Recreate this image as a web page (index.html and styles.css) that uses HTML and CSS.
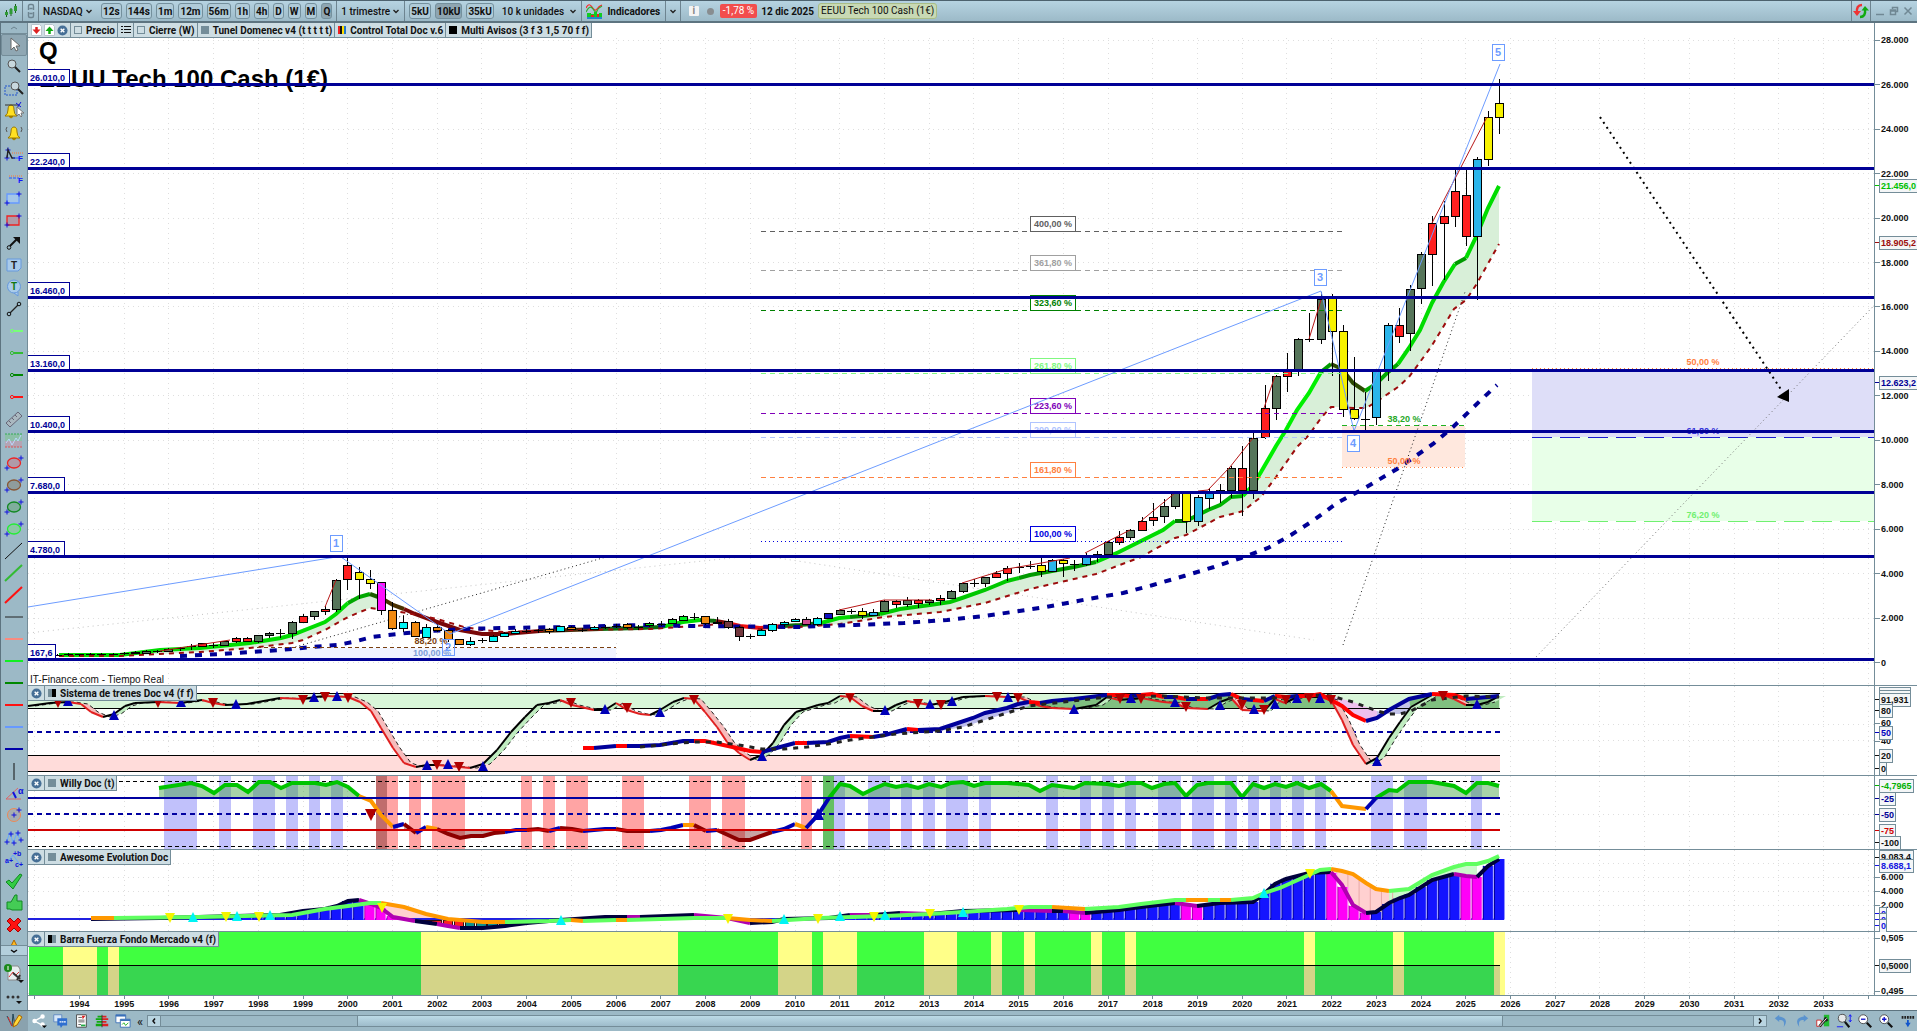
FILE: index.html
```html
<!DOCTYPE html>
<html lang="es">
<head>
  <meta charset="UTF-8" />
  <meta name="viewport" content="width=device-width, initial-scale=1" />
  <title>NASDAQ - EEUU Tech 100 Cash (1€)</title>
  <link rel="stylesheet" href="styles.css">
</head>
<body>

  <header class="toolbar">
    <button class="tool-btn logo-btn" aria-label="Gráfico">
      <svg width="16" height="16" viewBox="0 0 16 16"><path d="M3.500 7v7M8 5v8M12.500 1v9" stroke="#1c5c1c"/><path d="M2 9h3v3H2zM6.500 6h3v5h-3zM11 3h3v5h-3z" fill="#2f9a35"/></svg>
    </button>
    <button class="tool-btn link-btn" aria-label="Vincular">
      <svg width="8" height="16" viewBox="0 0 8 16" fill="none" stroke="#6d8490" stroke-width="1.400"><path d="M1.500 7V3q0-1.500 1.500-1.500h2q1.500 0 1.500 1.500v4M1.500 9v4q0 1.500 1.500 1.500h2q1.500 0 1.500-1.500V9M2.500 5.500h3M2.500 10.500h3"/></svg>
    </button>
    <label class="picker picker-symbol"><select aria-label="Lista"><option>NASDAQ</option></select><svg class="chev" viewBox="0 0 8 8"><path d="M1.500 3l2.500 2.500L6.500 3"/></svg></label>
    <div class="group">
      <button class="pill">12s</button>
      <button class="pill">144s</button>
      <button class="pill">1m</button>
      <button class="pill">12m</button>
      <button class="pill">56m</button>
      <button class="pill">1h</button>
      <button class="pill">4h</button>
      <button class="pill">D</button>
      <button class="pill">W</button>
      <button class="pill">M</button>
      <button class="pill active">Q</button>
    </div>
    <label class="picker picker-period"><select aria-label="Periodo"><option>1 trimestre</option></select><svg class="chev" viewBox="0 0 8 8"><path d="M1.500 3l2.500 2.500L6.500 3"/></svg></label>
    <div class="group group-units">
      <button class="pill">5kU</button>
      <button class="pill active">10kU</button>
      <button class="pill">35kU</button>
    </div>
    <label class="picker picker-units"><select aria-label="Unidades"><option>10 k unidades</option></select><svg class="chev" viewBox="0 0 8 8"><path d="M1.500 3l2.500 2.500L6.500 3"/></svg></label>
    <button class="tool-btn indicators">
      <svg width="17" height="16" viewBox="0 0 17 16" fill="none"><path d="M0 5q3-6 6-1t5 2 5-4" stroke="#f22" stroke-width="1.200"/><path d="M0 9q4-8 7-3t4 2 5-5" stroke="#3a3" stroke-width="1.200"/><path d="M1 10h4v1h3v-2h3v2h2v-1h3v5H1z" fill="#1c2"/><path d="M1 14h15v2H1z" fill="#28c"/><path d="M5 12h3v2H5zM11 11h2v3h-2z" fill="#e22"/></svg>
      Indicadores
    </button>
    <button class="tool-btn more-btn" aria-label="Más indicadores"><svg class="chev" viewBox="0 0 8 8"><path d="M1.500 3l2.500 2.500L6.500 3"/></svg></button>
    <button class="info" aria-label="Información">i</button>
    <span class="status-dot"></span>
    <span class="change">-1,78 %</span>
    <span class="date">12 dic 2025</span>
    <span class="instrument">EEUU Tech 100 Cash (1€)</span>
    <div class="window-buttons">
      <button class="tool-btn sync" aria-label="Sincronizar"><svg width="16" height="16" viewBox="0 0 16 16" fill="none" stroke-width="2.400"><path d="M9 2q-6 0-5 8" stroke="#e33"/><path d="M0 8h8l-4 5z" fill="#e33"/><path d="M7 14q6 0 5-8" stroke="#1a1"/><path d="M8.500 7.500h7.500L12 3z" fill="#1a1"/></svg></button>
      <button class="win" aria-label="Minimizar"><svg viewBox="0 0 10 10"><path d="M1 8.500h8"/></svg></button>
      <button class="win" aria-label="Restaurar"><svg viewBox="0 0 10 10"><path d="M3.500 3V1.500h5v4H7M1.500 4h5v4.500h-5zM1.500 5h5"/></svg></button>
      <button class="win" aria-label="Cerrar"><svg viewBox="0 0 10 10"><path d="M1.500 1.500l7 7M8.500 1.500l-7 7"/></svg></button>
    </div>
  </header>

  <main class="workspace">
    <nav class="sidebar">
      <button class="caret" aria-label="Subir"><svg viewBox="0 0 10 6"><path d="M2 4l3-2 3 2" fill="none" stroke="#6d8490"/></svg></button>
      <div class="tools" id="tools"></div>
      <button class="caret caret-down" aria-label="Bajar"><svg viewBox="0 0 10 6"><path d="M2 2l3 2 3-2" fill="none" stroke="#111" stroke-width="1.500"/></svg></button>
      <button class="tool config" aria-label="Configurar"><svg width="20" height="20" viewBox="0 0 20 20"><path d="M4 3h10l2 3v11H4z" fill="#e8eef0" stroke="#888"/><path d="M5 14l4-5 3 3 3-3" fill="none" stroke="#d33"/><circle cx="4" cy="5" r="4" fill="#1b8a1b"/><path d="M4 3v4" stroke="#fff"/><path d="M9 10l7 6M16 12l-3 5" stroke="#333" stroke-width="2"/><path d="M14 17h6l-3 3z" fill="#111"/></svg></button>
      <button class="tool dots" aria-label="Más"><svg width="20" height="12" viewBox="0 0 20 12" fill="#333"><circle cx="4" cy="3" r="1.500"/><circle cx="9" cy="3" r="1.500"/><circle cx="14" cy="3" r="1.500"/><path d="M12 7h6l-3 3z" fill="#111"/></svg></button>
    </nav>

    <div class="charts">
      <section class="panel panel-price">
        <svg id="price"></svg>
        <div class="chips">
          <span class="chip chip-icons">
            <svg width="11" height="12" viewBox="0 0 11 12"><path d="M.5.500h8l2 2v9H.5z" fill="#fff" stroke="#b8c4cc"/><path d="M5.500 3v3" stroke="#d22" stroke-width="2.500"/><path d="M1.500 5.500h8l-4 4.500z" fill="#d22"/></svg>
            <svg width="11" height="12" viewBox="0 0 11 12"><path d="M.5.500h8l2 2v9H.5z" fill="#fff" stroke="#b8c4cc"/><path d="M5.500 6v4" stroke="#1a1" stroke-width="2.500"/><path d="M1.500 7h8l-4-4.500z" fill="#1a1"/></svg>
            <svg class="close" viewBox="0 0 12 12"><circle cx="6" cy="6" r="5.500"/><path d="M4 4l4 4M8 4l-4 4"/></svg>
          </span>
          <span class="chip"><i class="swatch hollow"></i>Precio</span>
          <span class="chip chip-list"><svg width="10" height="10" viewBox="0 0 10 10"><path d="M0 1.500h2M0 4.500h2M0 7.500h2M3 1.500h7M3 4.500h7M3 7.500h7" stroke="#111"/></svg></span>
          <span class="chip"><i class="swatch hollow"></i>Cierre (W)</span>
          <span class="chip"><i class="swatch gray"></i>Tunel Domenec v4 (t t t t t)</span>
          <span class="chip"><i class="swatch rainbow"></i>Control Total Doc v.6</span>
          <span class="chip"><i class="swatch black"></i>Multi Avisos (3 f 3 1,5 70 f f)</span>
        </div>
      </section>
      <section class="panel panel-trains">
        <svg id="trains"></svg>
        <div class="chips"><span class="chip"><svg class="close" viewBox="0 0 12 12"><circle cx="6" cy="6" r="5.500"/><path d="M4 4l4 4M8 4l-4 4"/></svg></span><span class="chip"><i class="swatch half"></i>Sistema de trenes Doc v4 (f f)</span></div>
      </section>
      <section class="panel panel-willy">
        <svg id="willy"></svg>
        <div class="chips"><span class="chip"><svg class="close" viewBox="0 0 12 12"><circle cx="6" cy="6" r="5.500"/><path d="M4 4l4 4M8 4l-4 4"/></svg></span><span class="chip"><i class="swatch gray"></i>Willy Doc (t)</span></div>
      </section>
      <section class="panel panel-awesome">
        <svg id="awesome"></svg>
        <div class="chips"><span class="chip"><svg class="close" viewBox="0 0 12 12"><circle cx="6" cy="6" r="5.500"/><path d="M4 4l4 4M8 4l-4 4"/></svg></span><span class="chip"><i class="swatch gray"></i>Awesome Evolution Doc</span></div>
      </section>
      <section class="panel panel-force">
        <svg id="force"></svg>
        <div class="chips"><span class="chip"><svg class="close" viewBox="0 0 12 12"><circle cx="6" cy="6" r="5.500"/><path d="M4 4l4 4M8 4l-4 4"/></svg></span><span class="chip"><i class="swatch half-left"></i>Barra Fuerza Fondo Mercado v4 (f)</span></div>
      </section>
      <section class="panel panel-time">
        <svg id="time"></svg>
      </section>
    </div>
  </main>

  <footer class="bottombar">
    <button class="draw-btn" aria-label="Dibujo"><svg width="18" height="18" viewBox="0 0 18 18"><path d="M2 4l5 10 1-12 2 12" fill="none" stroke="#245"/><path d="M3 5l4 9" stroke="#d33"/><path d="M8 15l1-4 5-8 3 2-5 8z" fill="#ffd83a" stroke="#a60"/></svg></button>
    <button class="foot" aria-label="Compartir"><svg viewBox="0 0 18 18"><path d="M13 4L4 9l9 5" fill="none" stroke="#fff" stroke-width="1.500"/><circle cx="13" cy="4" r="2.500" fill="#fff"/><circle cx="4" cy="9" r="2.500" fill="#fff"/><circle cx="13" cy="13" r="2.500" fill="#fff"/><path d="M12 14h6l-3 3z"/></svg></button>
    <button class="foot" aria-label="Chat"><svg viewBox="0 0 18 18"><path d="M2 2h9v8H2z" fill="#d5e6f8" stroke="#5c86c0"/><path d="M6 6h11v8h-5l-2 3-1-3H6z" fill="#2f6fd0"/><path d="M8.500 10h2M11 10h2M13.500 10h2" stroke="#fff" stroke-width="1.500"/></svg></button>
    <button class="foot" aria-label="Informe"><svg viewBox="0 0 18 18"><path d="M4 2h11v14H4z" fill="#fff" stroke="#444"/><path d="M6 5h4M6 8h7M6 10h7M6 13h3" stroke="#555"/><path d="M10 3h4l-3 4z" fill="#d22"/><path d="M9 13h5v2H9z" fill="#2a4"/></svg></button>
    <button class="foot" aria-label="Órdenes"><svg viewBox="0 0 18 18"><path d="M4 3h5v2H4zM2 6h7v2H2zM3 9h6v2H3zM2 12h7v3H2z" fill="#1a1"/><path d="M9 3h5v2H9zM9 6h7v2H9zM9 9h5v2H9zM9 12h7v3H9z" fill="#d22"/><path d="M9 2v14" stroke="#333"/></svg></button>
    <button class="foot" aria-label="Ventanas"><svg viewBox="0 0 18 18"><path d="M1 2h11v9H1z" fill="#fff" stroke="#3a70b8"/><path d="M1 3h11" stroke="#3a70b8" stroke-width="2"/><path d="M6 7h11v9H6z" fill="#fff" stroke="#3a70b8"/><path d="M6 8h11" stroke="#3a70b8" stroke-width="2"/><path d="M8 13l2-2 2 3 3-3" fill="none" stroke="#1a1"/></svg></button>
    <button class="collapse" aria-label="Plegar">«</button>
    <div class="scrollbar">
      <button class="scroll-btn" aria-label="Izquierda"><svg viewBox="0 0 8 8"><path d="M5 1.500L3 4l2 2.500"/></svg></button>
      <div class="track"><div class="thumb"></div></div>
      <button class="scroll-btn" aria-label="Derecha"><svg viewBox="0 0 8 8"><path d="M3 1.500L5 4 3 6.500"/></svg></button>
    </div>
    <div class="foot-right">
      <button class="foot" aria-label="Deshacer"><svg viewBox="0 0 18 18"><path d="M7 2L2 6l5 4V8q7-1 5 8 7-10-5-12z" fill="#5a93cf"/></svg></button>
      <button class="foot" aria-label="Rehacer"><svg viewBox="0 0 18 18"><path d="M11 2l5 4-5 4V8q-7-1-5 8-7-10 5-12z" fill="#5a93cf"/></svg></button>
      <button class="foot" aria-label="Ajustes"><svg viewBox="0 0 18 18"><path d="M2 8h5v7H2z" fill="#fff" stroke="#c22"/><path d="M10 2h6v13h-6z" fill="#2b3"/><path d="M5 15l8-9M11 5l3 4" stroke="#222" stroke-width="3"/><path d="M5 15l8-9" stroke="#fff"/></svg></button>
      <button class="foot" aria-label="Ajustar zoom"><svg viewBox="0 0 18 18"><circle cx="7" cy="6" r="4.500" fill="#e5e9ea" stroke="#444"/><path d="M10 10l5 6" stroke="#111" stroke-width="2.500"/><path d="M16 2v8M1 15.500h7M14.500 4L16 2l1.500 2M14.500 8L16 10l1.500-2" stroke="#11f" fill="none"/></svg></button>
      <button class="foot" aria-label="Alejar"><svg viewBox="0 0 18 18"><circle cx="7" cy="7" r="5" fill="#fff" stroke="#444"/><path d="M11 11l5 5" stroke="#111" stroke-width="2.500"/><path d="M4.500 7h5" stroke="#11c" stroke-width="1.500"/></svg></button>
      <button class="foot" aria-label="Acercar"><svg viewBox="0 0 18 18"><circle cx="7" cy="7" r="5" fill="#fff" stroke="#444"/><path d="M11 11l5 5" stroke="#111" stroke-width="2.500"/><path d="M4.500 7h5M7 4.500v5" stroke="#11c" stroke-width="1.500"/></svg></button>
      <button class="foot" aria-label="Ir al final"><svg viewBox="0 0 18 18"><path d="M3 5h14" stroke="#222" stroke-width="3" stroke-dasharray="2 1"/><path d="M10 8v4" stroke="#15c" stroke-width="2"/><path d="M7 11h6l-3 5z" fill="#15c"/></svg></button>
    </div>
  </footer>

  <script src="script.js"></script>
</body>
</html>
```
FILE: styles.css
```css
* {
  box-sizing: border-box;
}
html, body {
  height: 100%;
}
body {
  margin: 0;
  display: flex;
  flex-direction: column;
  overflow: hidden;
  background: #9cb9c6;
  color: #111;
  font-family: Roboto, "Liberation Sans", sans-serif;
  font-size: 10px;
  font-weight: 700;
}
button, select {
  font: inherit;
  color: inherit;
  background: none;
  border: 0;
  margin: 0;
  padding: 0;
}
svg {
  display: block;
}

/* Top toolbar */
.toolbar {
  flex: none;
  height: 23px;
  display: flex;
  align-items: center;
  background: linear-gradient(#b6d3e1, #9cbac8);
  border-top: 1px solid #4d626e;
  border-bottom: 2px solid #5d7480;
  white-space: nowrap;
}
.tool-btn {
  height: 20px;
  display: flex;
  align-items: center;
  justify-content: center;
  gap: 4px;
}
.logo-btn {
  width: 23px;
  border-right: 1px solid #6d8490;
}
.link-btn {
  width: 16px;
  border-right: 1px solid #6d8490;
}
.picker {
  position: relative;
  display: flex;
  align-items: center;
  height: 20px;
}
.picker select {
  appearance: none;
  width: 100%;
  padding-left: 4px;
  font-weight: 500;
}
.picker .chev {
  position: absolute;
  right: 4px;
}
.chev {
  width: 8px;
  height: 8px;
  fill: none;
  stroke: #222;
  stroke-width: 1.4;
}
.picker-symbol {
  width: 58px;
}
.picker-period {
  width: 69px;
  border-left: 1px solid #6d8490;
  border-right: 1px solid #6d8490;
}
.picker-units {
  width: 84px;
  margin-left: 2px;
  border-right: 1px solid #6d8490;
}
.group {
  display: flex;
  gap: 4px;
  padding: 0 4px;
}
.group-units {
  padding-right: 2px;
}
.pill {
  height: 16px;
  padding: 0 1px;
  border: 1px solid #74909d;
  border-radius: 3px;
  background: #b0cbd8;
}
.pill.active {
  background: #8ea5b1;
}
.indicators {
  width: 84px;
  border-right: 1px solid #6d8490;
}
.more-btn {
  width: 15px;
  border-right: 1px solid #6d8490;
}
.info {
  width: 10px;
  height: 10px;
  margin-left: 8px;
  line-height: 10px;
  background: #f4f4f4;
  border-radius: 1px;
  color: #888;
}
.status-dot {
  width: 7px;
  height: 7px;
  margin: 0 6px 0 8px;
  border-radius: 50%;
  background: #888d90;
}
.change {
  padding: 0 3px;
  line-height: 14px;
  border-radius: 2px;
  background: #f24d4d;
  color: #fff;
  font-weight: 400;
}
.date {
  margin: 0 4px;
}
.instrument {
  padding: 0 2px;
  line-height: 14px;
  border: 1px solid #a9bd86;
  border-radius: 3px;
  background: #c8d9b4;
  font-weight: 400;
}
.window-buttons {
  display: flex;
  align-items: center;
  gap: 4px;
  margin-left: auto;
  padding-right: 4px;
}
.sync {
  width: 20px;
  border-left: 1px solid #6d8490;
  border-right: 1px solid #6d8490;
}
.win svg {
  width: 10px;
  height: 10px;
  fill: none;
  stroke: #708894;
  stroke-width: 1.5;
}

/* Sidebar */
.workspace {
  flex: 1;
  min-height: 0;
  display: flex;
}
.sidebar {
  flex: none;
  width: 28px;
  display: flex;
  flex-direction: column;
  border-left: 1px solid #5d7480;
  border-right: 1px solid #748d99;
}
.caret {
  flex: none;
  height: 11px;
  display: flex;
  align-items: center;
  justify-content: center;
  border-bottom: 1px solid #748d99;
}
.caret svg {
  width: 10px;
  height: 6px;
}
.caret-down {
  border-top: 1px solid #748d99;
  background: #b3cfdc;
}
.tools {
  flex: 1;
  min-height: 0;
  overflow: hidden;
}
.tool {
  width: 26px;
  height: 22px;
  display: flex;
  align-items: center;
  justify-content: center;
}
.tool.selected {
  border: 1px solid #748d99;
  border-radius: 2px;
  background: #8fa7b3;
}
.config {
  flex: none;
  height: 34px;
}
.dots {
  flex: none;
  height: 20px;
}

/* Charts */
.charts {
  flex: 1;
  min-width: 0;
  display: flex;
  flex-direction: column;
  background: #fff;
}
.panel {
  position: relative;
  min-height: 0;
  overflow: hidden;
}
.panel > svg {
  position: absolute;
  inset: 0;
  width: 100%;
  height: 100%;
  font-family: "Liberation Sans", Arial, sans-serif;
}
.panel-price { flex: 663 1 0; }
.panel-trains { flex: 90 1 0; }
.panel-willy { flex: 74 1 0; }
.panel-awesome { flex: 82 1 0; }
.panel-force { flex: 64 1 0; }
.panel-time { flex: 0 0 14px; }
.axis-text {
  font-size: 9px;
  font-weight: 700;
}
.title-text {
  font-size: 24px;
  font-weight: 700;
}
.note-text {
  font-size: 10px;
  font-weight: 400;
}
.wave-text {
  font-size: 11px;
  font-weight: 700;
}
.chips {
  position: absolute;
  left: 0;
  top: 0;
  display: flex;
  border-bottom: 1px solid #748d99;
  background: #cddde3;
}
.chip {
  height: 14px;
  display: flex;
  align-items: center;
  gap: 4px;
  padding: 0 2px 0 3px;
  border-right: 1px solid #748d99;
  white-space: nowrap;
}
.chip-icons {
  gap: 2px;
}
.close {
  width: 11px;
  height: 11px;
  fill: #466f96;
  stroke: #fff;
  stroke-width: 1.5;
}
.close circle {
  stroke: none;
}
.swatch {
  width: 8px;
  height: 8px;
  background: #748d99;
}
.hollow {
  border: 1px solid #748d99;
  background: none;
}
.black {
  background: #000;
}
.half {
  background: linear-gradient(90deg, #748d99 50%, #000 50%);
}
.half-left {
  background: linear-gradient(90deg, #000 50%, #748d99 50%);
}
.rainbow {
  background: linear-gradient(90deg, #e22 25%, #111 25% 50%, #fd0 50% 75%, #27c 75%);
}

/* Bottom bar */
.bottombar {
  flex: none;
  height: 21px;
  display: flex;
  align-items: center;
  border-top: 1px solid #5d7480;
}
.draw-btn {
  width: 28px;
  height: 20px;
  display: flex;
  align-items: center;
  justify-content: center;
  background: #8aa2ae;
}
.foot {
  width: 21px;
  display: flex;
  justify-content: center;
}
.foot svg {
  width: 16px;
  height: 16px;
}
.collapse {
  width: 14px;
  font-size: 13px;
  font-weight: 400;
  line-height: 13px;
}
.scrollbar {
  flex: 1;
  display: flex;
  height: 12px;
  border: 1px solid #748d99;
  margin-right: 3px;
}
.scroll-btn {
  width: 12px;
  display: flex;
  align-items: center;
  justify-content: center;
  background: #b9d5e1;
}
.scroll-btn svg {
  width: 8px;
  height: 8px;
  fill: none;
  stroke: #111;
  stroke-width: 1.5;
}
.track {
  flex: 1;
  border: 0 solid #748d99;
  border-width: 0 1px;
}
.thumb {
  margin-left: 12.3%;
  width: 72%;
  height: 10px;
  background: linear-gradient(#bcdae6, #9ebccb);
  border: 0 solid #748d99;
  border-width: 0 1px;
}
.foot-right {
  display: flex;
}
```
FILE: script.js
```js
/* ---------- Drawing tools in the sidebar ---------- */
const plus = (x, y) => `<path d="M${x - 2.5} ${y}h5M${x} ${y - 2.5}v5" stroke="#11d"/>`;
const rect = (c, f) => `<path d="M3 5h12v9H3z" fill="${f}" stroke="${c}" stroke-width="1.3"/>${plus(3, 14)}${plus(15, 5)}`;
const oval = (c, f) => `<ellipse cx="10" cy="10" rx="6.500" ry="5" fill="${f}" stroke="${c}" stroke-width="1.3"/>${plus(3, 15)}${plus(17, 5)}`;
const ray = c => `<circle cx="8" cy="10" r="1.6" fill="none" stroke="${c}"/><path d="M10 10h9" stroke="${c}" stroke-width="2"/>`;
const diag = (c, w) => `<path d="M1 18L18 2" stroke="${c}" stroke-width="${w}"/>`;
const hline = (c, w) => `<path d="M1 10h18" stroke="${c}" stroke-width="${w}"/>`;
const lens = (x, y) => `<circle cx="${x}" cy="${y}" r="4" fill="#c8d8de" stroke="#555"/><path d="M${x + 3} ${y + 3}l5 5" stroke="#222" stroke-width="2"/>`;
const bell = x => `<path d="M${x - 6} 15q3-2 3-6 0-5 3-5t3 5q0 4 3 6z" fill="#ffe022" stroke="#9a7a00"/><path d="M${x - 2} 15.500q2 3 4 0z" fill="#ffe022" stroke="#9a7a00"/>`;
const letter = (x, y, s, c, t) => `<text x="${x}" y="${y}" font-size="${s}" fill="${c}" font-family="Liberation Sans">${t}</text>`;

const tools = [
  ['Cursor', '<path d="M7 3v12l3-3 2 4 2-1-2-4h4z" fill="#fff" stroke="#666"/>'],
  ['Zoom', lens(8, 7)],
  ['Zoom de zona', '<path d="M1 7h12v9H1z" fill="none" stroke="#25c" stroke-dasharray="2 1"/>' + lens(11, 7)],
  ['Alerta', bell(7) + '<path d="M1 4h14" stroke="#333"/><path d="M12 2l5 4M17 1l-4 6" stroke="#11d"/><path d="M13 6v9l2-2 2 3 1-1-1-3h3z" fill="#fff" stroke="#777"/>'],
  ['Campana', bell(10) + '<path d="M3 4q-2 2 0 5M17 4q2 2 0 5" fill="none" stroke="#555"/>'],
  ['Retroceso', plus(4, 5) + plus(3, 13) + '<path d="M3 13l1-8 4 8h3" fill="none" stroke="#222" stroke-width="1.4"/><path d="M8 8h11" stroke="#f73" stroke-dasharray="1 1"/><path d="M9 13h6" stroke="#25f"/>' + letter(14, 16, 8, '#11f', 'F')],
  ['Fibonacci', '<path d="M5 9h13" stroke="#f73" stroke-dasharray="1 1"/><path d="M5 11h10" stroke="#25f" stroke-dasharray="3 1"/>' + letter(14, 16, 8, '#11f', 'F')],
  ['Rectángulo azul', rect('#69f', '#a4c6e8')],
  ['Rectángulo rojo', rect('#e22', '#b09aa8')],
  ['Flecha', '<path d="M6 13l8-8" stroke="#111" stroke-width="2"/><circle cx="5" cy="14.500" r="1.800" fill="none" stroke="#111"/><path d="M9 4h7v7z" fill="#111"/>'],
  ['Texto', '<path d="M3 4h14v9l-3 3H3z" fill="#a9cbea" stroke="#69d"/>' + letter(7, 14, 10, '#222', 'T')],
  ['Nota', '<path d="M10 3a6.500 6.500 0 1 1 0 13 6.500 6.500 0 0 1 0-13zM10 16l4 3v-4" fill="#a9cbea" stroke="#69d"/>' + letter(7, 13, 10, '#171', 'T')],
  ['Segmento', '<path d="M6 14l8-8" stroke="#222" stroke-width="1.300"/><circle cx="5" cy="15" r="1.800" fill="none" stroke="#111"/><circle cx="15" cy="5" r="1.800" fill="none" stroke="#111"/>'],
  ['Semirrecta 1', ray('#7f7')],
  ['Semirrecta 2', ray('#3b3')],
  ['Semirrecta 3', ray('#080')],
  ['Semirrecta 4', ray('#f11')],
  ['Regla', '<path d="M2 14L14 3l4 4L6 18z" fill="#aab8c0" stroke="#667"/><path d="M5 12l2 2M8 9l2 2M11 6l2 2" stroke="#667"/>'],
  ['Canal', '<path d="M1 3h17v7H1z" fill="#8cc0a8"/><path d="M1 10h17v6H1z" fill="#b4a4b4"/><path d="M1 3h17" stroke="#3a5" stroke-dasharray="2 1"/><path d="M1 16h17" stroke="#d55" stroke-dasharray="2 1"/><path d="M2 12l3-4 3 6 4-7 2 3 3-6" fill="none" stroke="#bbd8ff"/>'],
  ['Elipse roja', oval('#e22', '#b09aa8')],
  ['Elipse marrón', oval('#853', '#8f9c9c')],
  ['Elipse verde', oval('#182', '#7fae9c')],
  ['Elipse clara', oval('#2e3', '#8cc8a4')],
  ['Recta negra', diag('#111', 1)],
  ['Recta verde', diag('#3b3', 2)],
  ['Recta roja', diag('#f11', 2)],
  ['Horizontal negra', hline('#222', 1)],
  ['Horizontal rosa', hline('#f98b80', 2)],
  ['Horizontal lima', hline('#1e2', 2)],
  ['Horizontal verde', hline('#080', 2)],
  ['Horizontal roja', hline('#f11', 2)],
  ['Horizontal celeste', hline('#69f', 2)],
  ['Horizontal azul', hline('#00a', 2)],
  ['Vertical', '<path d="M10 2v17" stroke="#111"/>'],
  ['Ángulo', '<path d="M17 16H2L14 5" fill="none" stroke="#d66"/><path d="M9 9l3 6" stroke="#11d" stroke-width="2"/>' + letter(14, 11, 9, '#11d', 'α')],
  ['Círculo', '<circle cx="10" cy="10" r="6.500" fill="#a7aeb0" stroke="#e85"/>' + plus(10, 10) + plus(15, 5)],
  ['Ondas 1-5', '<path d="M2 16L6 5l3 11 4-10 4 9" fill="none" stroke="#6af"/>' + plus(3, 15) + plus(7, 7) + plus(10, 16) + plus(14, 6) + plus(17, 13)],
  ['Ondas abc', '<path d="M2 15L9 6l8 11" fill="none" stroke="#6af"/>' + letter(1, 14, 7, '#11d', 'a+') + letter(9, 7, 7, '#11d', '+b') + letter(11, 18, 7, '#11d', 'c+')],
  ['Aceptar', '<path d="M2 11l3-2 3 3 8-9 2 1-9 14z" fill="#3c4" stroke="#182"/>'],
  ['Pulgar', '<path d="M3 9h4l4-7h2v6h5v9H8l-2-1H3z" fill="#4c5" stroke="#182"/>'],
  ['Borrar', '<path d="M3 6l3-3 4 4 4-4 3 3-4 4 4 4-3 3-4-4-4 4-3-3 4-4z" fill="#f11" stroke="#a00"/>'],
  ['Aviso', '<path d="M10 3l7 14H3z" fill="#fb2" stroke="#a60"/>']
];
document.getElementById('tools').innerHTML = tools.map(([name, art], i) =>
  `<button class="tool${i ? '' : ' selected'}" aria-label="${name}"><svg width="20" height="20" viewBox="0 0 20 20">${art}</svg></button>`
).join('');

/* ---------- Chart data, in units of the 1889 px wide chart ---------- */
const LEFT = 28, AXIS = 1874.5, END = 1499.5, WIDTH = 1889;
const STEP = 11.185;
const qx = i => 79 + i * STEP;   // i = quarters since 1994

const fills = { r: '#ff2020', g: '#56755a', y: '#f7f200', b: '#2bb5ea', c: '#00f5f5', o: '#f08a10', m: '#ff10ff', n: '#1212c0', l: '#00f020', w: '#73383e', p: '#d04a90' };

// high, top, bottom, low, colour - one row per quarter from 1993 Q3
const candles = [
  [654,655,656,656,'k'],[653,654,655,656,'k'],
  [654,654,655,656,'k'],[653,654,654,655,'k'],[653,654,654,655,'k'],[653,654,654,655,'k'],
  [652,653,653,655,'k'],[651,652,653,654,'g'],[650,651,653,654,'g'],[650,651,651,653,'k'],
  [648,649,651,652,'g'],[647,648,649,651,'k'],[644,646,647,650,'k'],[643,643,646,647,'r'],
  [643,645,645,648,'k'],[641,641,645,646,'g'],[637,638,641,643,'r'],[637,638,641,642,'r'],
  [635,635,641,643,'g'],[632,633,635,638,'g'],[629,633,633,638,'k'],[621,622,633,639,'g'],
  [614,616,622,623,'r'],[611,611,616,620,'g'],[606,609,611,615,'r'],[579,580,609,612,'g'],
  [558,565,579,590,'r'],[567,572,579,599,'y'],[570,579,583,589,'y'],[582,582,610,615,'m'],
  [602,610,628,630,'o'],[616,622,628,632,'c'],[621,622,636,637,'o'],[624,627,637,638,'c'],
  [624,627,630,632,'o'],[629,630,639,642,'o'],[639,639,644,645,'o'],[637,641,644,646,'c'],
  [638,640,640,643,'k'],[635,636,641,641,'c'],[632,633,636,637,'c'],[629,631,633,634,'c'],
  [629,631,631,633,'k'],[629,630,630,633,'k'],[628,629,631,634,'o'],[626,626,631,632,'c'],
  [626,627,629,630,'o'],[628,630,630,632,'k'],[626,627,629,630,'c'],[625,627,627,629,'k'],
  [624,626,626,628,'k'],[623,624,627,629,'o'],[625,627,627,630,'k'],[622,623,625,627,'l'],
  [621,624,624,626,'k'],[618,619,623,624,'l'],[615,616,620,621,'l'],[613,617,617,620,'k'],
  [616,616,623,625,'o'],[617,622,623,624,'c'],[619,621,627,629,'w'],[626,627,636,641,'w'],
  [634,636,636,639,'k'],[629,630,635,636,'c'],[623,624,630,632,'c'],[621,622,624,627,'c'],
  [618,619,621,622,'c'],[617,619,624,625,'p'],[617,618,624,626,'c'],[613,613,618,619,'n'],
  [609,610,614,615,'g'],[609,611,611,614,'k'],[608,611,615,619,'y'],[609,612,615,616,'b'],
  [600,601,611,612,'g'],[600,601,604,608,'r'],[597,600,604,607,'g'],[599,600,603,608,'r'],
  [599,600,602,605,'g'],[595,598,600,605,'r'],[590,591,598,599,'g'],[583,583,591,593,'g'],
  [579,583,583,587,'k'],[577,577,583,587,'g'],[571,573,577,578,'r'],[566,568,573,581,'r'],
  [563,567,567,573,'k'],[561,566,566,569,'k'],[558,565,571,577,'y'],[559,560,571,572,'b'],
  [559,560,563,577,'y'],[560,564,564,571,'k'],[553,555,564,566,'b'],[551,554,554,562,'k'],
  [541,542,554,555,'g'],[531,537,542,545,'r'],[529,530,537,540,'g'],[517,521,530,530,'r'],
  [503,517,520,526,'r'],[499,506,516,523,'g'],[493,493,506,509,'g'],[493,493,521,533,'y'],
  [495,497,521,526,'b'],[488,491,498,509,'b'],[484,490,490,503,'k'],[466,468,490,498,'g'],
  [446,468,490,516,'r'],[432,438,490,499,'g'],[385,408,437,439,'r'],[375,376,408,420,'g'],
  [353,371,376,392,'r'],[338,339,370,376,'g'],[313,339,339,342,'k'],[292,299,339,344,'g'],
  [294,298,331,376,'y'],[325,331,409,417,'y'],[357,409,418,420,'y'],[392,419,419,430,'k'],
  [370,371,417,425,'b'],[323,325,370,381,'b'],[308,325,336,343,'r'],[285,289,333,351,'g'],
  [252,254,288,304,'g'],[216,223,254,286,'r'],[201,216,223,280,'r'],[169,191,216,227,'r'],
  [169,195,236,246,'r'],[157,159,236,300,'b'],[111,117,159,166,'y'],[79,103,117,134,'y']
];

const ema = [
  ['#00dc00', '59,655 120,655 160,650 200,648 250,643 281,638 292,635 325,622 336,614 348,603'],
  ['#00a800', '359,597 370,594'],
  ['#1d5c00', '381,598'], ['#4a3000', '393,605 404,609'],
  ['#7a0808', '415,614 437,622 460,630 482,634 504,634 540,631'],
  ['#4a2a08', '570,630 600,629'],
  ['#0c6c0c', '640,628 661,627'],
  ['#00dc00', '683,622 700,620'],
  ['#0c6c0c', '716,621'], ['#7a0808', '727,623'],
  ['#f01010', '740,626 760,628 783,626'],
  ['#0c6c0c', '800,625 821,623'],
  ['#00dc00', '839,618 850,617'], ['#008c00', '862,616 880,614'],
  ['#00c800', '900,609 930,605 950,602 962,598 985,590 1007,581 1019,578'],
  ['#009a00', '1030,575 1052,571 1074,567 1096,562'],
  ['#00dc00', '1119,552 1141,541 1163,530 1175,521'], ['#007c00', '1186,521'],
  ['#00b400', '1208,510 1220,505 1231,497 1243,496'],
  ['#00f000', '1253,485 1261,472 1276,446 1286,430 1297,410 1309,393 1321,372'],
  ['#009a00', '1331,364'],
  ['#2c4a00', '1342,369 1353,383 1365,391'],
  ['#00a800', '1376,384 1387,373 1398,364'],
  ['#00dc00', '1409,348 1420,330 1432,303 1443,283 1455,264'], ['#009a00', '1466,258'],
  ['#00dc00', '1476,237 1488,208 1499,186']
];
const stop = '59,656 120,656 200,652 250,648 292,643 303,640 325,630 348,617 370,608 385,610 407,613 437,619 464,627 482,630 504,632 540,631 570,630 650,629 722,624 760,629 800,627 840,624 884,617 940,612 985,603 1030,589 1052,584 1096,574 1141,557 1175,538 1186,535 1220,517 1232,514 1243,511 1261,497 1276,477 1297,447 1309,435 1321,418 1331,407 1342,407 1353,408 1366,408 1376,402 1398,387 1409,377 1431,347 1454,309 1466,300 1476,285 1499,244';
const slowAvg = '180,656 220,654 250,652 281,650 312,647 337,645 353,642 372,637 388,635 407,633 430,631 464,629 500,628 571,627 640,625 690,626 797,627 855,625 904,623 947,620 985,616 1046,607 1088,599 1123,593 1153,585 1184,576 1214,567 1241,558 1268,548 1291,535 1314,520 1337,503 1363,489 1397,469 1433,444 1453,427 1483,398 1497,385';

const levels = [[84.5,'26.010,0'],[168.5,'22.240,0'],[297.5,'16.460,0'],[370.5,'13.160,0'],[431.5,'10.400,0'],[492.5,'7.680,0'],[556.5,'4.780,0'],[659.5,'167,6']];
const fibs = [[231,'400,00 %','#606060'],[270,'361,80 %','#a0a0a0'],[310,'323,60 %','#008000'],[373,'261,80 %','#80f880'],[413,'223,60 %','#8000b8'],[437,'200,00 %','#b0c4ff'],[477,'161,80 %','#ff8040'],[541,'100,00 %','#0000e0','1 3']];

/* ---------- Drawing helpers ---------- */
const parse = s => s.split(' ').map(p => p.split(',').map(Number));
let X, Y, out;

function put(s) { out.push(s); }
function line(x1, y1, x2, y2, c, w = 1, dash = '', extra = '') {
  put(`<line x1="${X(x1)}" y1="${Y(y1)}" x2="${X(x2)}" y2="${Y(y2)}" stroke="${c}" stroke-width="${w}" ${dash && `stroke-dasharray="${dash}"`} ${extra}/>`);
}
const crisp = 'shape-rendering="crispEdges"';
function box(x1, y1, x2, y2, f, s = 'none') {
  put(`<rect x="${X(x1)}" y="${Y(y1)}" width="${X(x2) - X(x1)}" height="${Y(y2) - Y(y1)}" fill="${f}" stroke="${s}" ${crisp}/>`);
}
const coords = pts => pts.map(p => X(p[0]).toFixed(1) + ',' + Y(p[1]).toFixed(1)).join(' ');
function poly(pts, c, w, dash = '') {
  put(`<polyline points="${coords(pts)}" fill="none" stroke="${c}" stroke-width="${w}" ${dash && `stroke-dasharray="${dash}"`}/>`);
}
function area(a, b, f) {
  put(`<polygon points="${coords(a)} ${coords([...b].reverse())}" fill="${f}"/>`);
}
// each run starts at the last point of the one before
function runs(list, w, each) {
  let last = null;
  list.forEach(([c, s]) => {
    const pts = parse(s);
    if (last) pts.unshift(last);
    last = pts[pts.length - 1];
    if (each) each(c, pts);
    poly(pts, c, w);
  });
}
const flat = list => list.flatMap(r => parse(r[1]));
function text(x, y, t, c = '#111', cls = 'axis-text', anchor = 'start') {
  put(`<text x="${X(x)}" y="${Y(y)}" fill="${c}" class="${cls}" text-anchor="${anchor}">${t}</text>`);
}
function up(x, y, c, s = 5) { put(`<path d="M${X(x) - s} ${Y(y) + s - 1}h${2 * s}l${-s} ${-2 * s}z" fill="${c}"/>`); }
function down(x, y, c, s = 5) { put(`<path d="M${X(x) - s} ${Y(y) - s + 1}h${2 * s}l${-s} ${2 * s}z" fill="${c}"/>`); }
function grid(y1, y2, rows) {
  for (let i = -1; i < 41; i++) line(79.5 + i * 44.72, y1, 79.5 + i * 44.72, y2, '#dedede', 1, '1 4', crisp);
  rows.forEach(y => line(LEFT, y, AXIS, y, '#dedede', 1, '1 4', crisp));
}
function tick(y, t, c = '#111') {
  line(AXIS, y, AXIS + 5, y, '#748d99', 1, '', crisp);
  if (t) put(`<text x="${X(1881)}" y="${Y(y) + 3}" fill="${c}" class="axis-text">${t}</text>`);
}
function tag(y, t, c, width) {
  line(AXIS, y, AXIS + 4, y, c, 1, '', crisp);
  put(`<rect x="${X(1879.5)}" y="${Y(y) - 6.5}" width="${width}" height="13" fill="#f4f6f7" stroke="#748d99" ${crisp}/>`);
  put(`<text x="${X(1881)}" y="${Y(y) + 3}" fill="${c}" class="axis-text">${t}</text>`);
}
function frame(bottom) {
  line(AXIS, bottom - 800, AXIS, bottom, '#748d99', 1, '', crisp);
  line(LEFT, bottom, LEFT + WIDTH, bottom, '#748d99', 1, '', crisp);
}
function valueAt(pts, x) {
  for (let i = 1; i < pts.length; i++) {
    const [a, b] = [pts[i - 1], pts[i]];
    if (x <= b[0]) return a[1] + (b[1] - a[1]) * (x - a[0]) / (b[0] - a[0]);
  }
  return pts[pts.length - 1][1];
}
function panel(id, top, height, draw) {
  const svg = document.getElementById(id);
  const w = svg.clientWidth, h = svg.clientHeight;
  X = x => (x - LEFT) * w / WIDTH;
  Y = y => (y - top) * h / height;
  out = [];
  draw();
  svg.innerHTML = out.join('');
}

/* ---------- Panels ---------- */
function drawPrice() {
  const rows = [];
  for (let v = 0; v <= 28; v += 2) rows.push(662.5 - v * 22.22);
  grid(38, 686, rows);

  line(28, 633, 750, 556, '#c4c4c4', 1, '1 4');
  line(765, 556, 1314, 640, '#c4c4c4', 1, '1 4');
  line(257, 658, 606, 557, '#222', 1, '1 3');

  // retracement zones
  box(1532, 369, AXIS, 437, '#dedef8');
  box(1532, 437, AXIS, 521, '#e8ffe8');
  line(1532, 368.5, AXIS, 368.5, '#ff8040', 1, '1 3', crisp);
  line(1532, 437.5, AXIS, 437.5, '#1a1ad0', 1, '20 8', crisp);
  line(1532, 521.5, AXIS, 521.5, '#70f070', 1, '20 8', crisp);
  text(1703, 365, '50,00 %', '#ff8040', 'axis-text', 'middle');
  text(1703, 434, '61,80 %', '#3030d8', 'axis-text', 'middle');
  text(1703, 518, '76,20 %', '#70f070', 'axis-text', 'middle');
  line(1536, 657, AXIS, 305, '#707070', 1, '1 3');
  box(1342, 426, 1465, 467, '#ffe8de');
  line(1342, 425.5, 1465, 425.5, '#20b020', 1, '5 4', crisp);
  line(1342, 467.5, 1465, 467.5, '#ff8040', 1, '1 3', crisp);
  box(257, 648, 616, 658, '#f0f3ff');

  // tunnel
  const main = flat(ema), low = parse(stop);
  area(main.filter(p => p[0] <= 385), [...low.filter(p => p[0] <= 385)], '#d8efd8');
  area(main.filter(p => p[0] > 800), [...low.filter(p => p[0] >= 800)], '#d8efd8');
  runs(ema, 4);
  poly(low, '#9c0c0c', 2, '5 5');
  poly(parse(slowAvg), '#000096', 4, '7 8');
  line(1343, 645, 1465, 292, '#222', 1, '1 3');

  candles.forEach(([hi, t, b, lo, c], n) => {
    const x = Math.round(X(qx(n - 2))) + 0.5;
    put(`<line x1="${x}" x2="${x}" y1="${Y(hi)}" y2="${Y(lo)}" stroke="#000" ${crisp}/>`);
    if (c === 'k') put(`<rect x="${x - 4.5}" y="${Y(t)}" width="9" height="1" ${crisp}/>`);
    else put(`<rect x="${x - 4}" y="${Math.round(Y(t)) + 0.5}" width="8" height="${Math.max(1, Math.round(Y(b) - Y(t)))}" fill="${fills[c]}" stroke="#000" ${crisp}/>`);
  });

  ['160,651 230,640', '325,607 336,580', '839,610 884,600 932,600', '962,583 1007,569 1070,558', '1085,553 1130,530', '1141,521 1175,493', '1198,491 1208,490 1230,467 1253,438', '1264,408 1275,376', '1309,339 1321,300', '1432,223 1487,117']
    .forEach(s => poly(parse(s), '#b81818', 1));

  fibs.forEach(([y, t, c, dash]) => {
    line(761, y + 0.5, 1342, y + 0.5, c, 1, dash || '5 4', crisp);
    box(1030.5, y - 14.5, 1075.5, y + 0.5, '#fff', c);
    text(1053, y - 4, t, c, 'axis-text', 'middle');
  });
  text(1404, 422, '38,20 %', '#28a828', 'axis-text', 'middle');
  text(1404, 464, '50,00 %', '#ff8040', 'axis-text', 'middle');
  line(257, 647.5, 616, 647.5, '#7a4010', 1, '4 3', crisp);
  text(431, 644, '88,20 %', '#7a4010', 'axis-text', 'middle');
  text(432, 656, '100,00 %', '#7f9fd8', 'axis-text', 'middle');

  poly(parse('28,607 336,557 341,557 450,634 1321,291 1354,431 1500,64'), '#6d9cff', 1);

  // projected drop
  line(1600, 117, 1782, 391, '#000', 2, '2 4');
  put(`<path d="M${X(1777)} ${Y(397)}l12 -8v13z"/>`);

  text(39, 59, 'Q', '#000', 'title-text');
  text(39, 87, 'EEUU Tech 100 Cash (1€)', '#000', 'title-text');
  text(30, 683, 'IT-Finance.com - Tiempo Real', '#111', 'note-text');

  levels.forEach(([y, t]) => {
    const w = t.length > 7 ? 42 : t.length > 6 ? 37 : 28;
    box(LEFT - 1, y - 15, LEFT + w - 0.5, y, '#fff', '#000096');
    text(30, y - 4, t, '#000096');
    line(LEFT, y, AXIS, y, '#000096', 3, '', crisp);
  });
  [[336, 543, 1], [448, 647, 2], [1320, 277, 3], [1353, 443, 4], [1498, 52, 5]].forEach(([x, y, n]) => {
    box(x - 6, y - 8, x + 6, y + 8, n === 2 ? 'none' : '#fff', '#6d9cff');
    text(x, y + 4, n, '#6d9cff', 'wave-text', 'middle');
  });

  frame(685.5);
  rows.forEach((y, i) => tick(y, i ? i * 2 + '.000' : '0'));
  tag(185.5, '21.456,0', '#00c000', 50);
  tag(242.5, '18.905,2', '#9c0c0c', 50);
  tag(382.5, '12.623,2', '#000096', 50);
}

const fast = parse('28,706 50,703 68,702 81,704 91,712 103,717 114,714 125,706 135,703 158,702 180,703 202,700 213,703 225,705 247,704 280,698 303,699 315,697 326,696 348,697 360,702 371,711 381,728 393,748 404,763 416,767 427,765 437,765 460,767 470,768 483,764 497,750 511,732 525,717 537,705 549,703 560,700 572,705 594,710 605,710 616,703 627,710 640,714 650,715 660,710 673,702 684,698 694,699 705,712 717,727 727,742 739,753 750,760 762,755 773,743 784,725 796,712 818,705 828,703 840,696 850,697 862,706 873,711 885,711 896,705 907,701 918,703 930,705 941,703 952,700 963,697 985,696 1007,697 1018,697 1029,702 1040,706 1052,708 1074,709 1085,707 1096,705 1107,697 1119,700 1141,698 1163,702 1175,703 1186,708 1208,709 1220,702 1231,698 1242,710 1264,711 1275,699 1285,703 1297,697 1320,697 1331,700 1342,720 1353,745 1366,764 1377,758 1389,738 1400,722 1411,707 1432,695 1443,695 1454,699 1466,705 1477,705 1488,702 1499,696');
const slowTrain = [
  ['#f00', '583,748 594,748'], ['#00009a', '616,746'], ['#f00', '627,746'], ['#00009a', '640,746 660,745 683,741 694,741'],
  ['#f00', '705,741 728,746 750,751 762,752'], ['#00009a', '773,749 795,743'], ['#f00', '807,743'], ['#00009a', '828,742 840,738 850,736'],
  ['#f00', '873,737'], ['#00009a', '885,735 907,729'], ['#f00', '918,730'], ['#00009a', '940,729 952,725 973,718 985,713 1007,708 1018,704 1029,702'],
  ['#f00', '1040,703'], ['#00009a', '1052,701 1074,699 1107,695'], ['#f00', '1119,695 1130,696'], ['#00009a', '1141,695'],
  ['#f00', '1152,694 1164,697'], ['#00009a', '1175,697'], ['#f00', '1186,699'], ['#00009a', '1197,699'], ['#f00', '1208,699'],
  ['#00009a', '1220,695 1231,694'], ['#f00', '1242,699'], ['#00009a', '1253,700'], ['#f00', '1264,701'], ['#00009a', '1275,696'],
  ['#f00', '1286,697'], ['#00009a', '1297,696'], ['#f00', '1309,696 1320,694 1331,700 1342,706 1353,715 1366,721'],
  ['#00009a', '1377,718 1389,710 1409,699 1432,694'], ['#f00', '1454,695 1466,699'], ['#00009a', '1499,696']
];
const slowSignal = '640,747 670,744 694,742 717,742 739,745 762,749 784,749 807,747 828,744 850,740 896,734 940,731 963,727 985,720 1007,713 1029,706 1063,702 1107,697 1164,696 1208,698 1275,698 1320,695 1331,696 1353,702 1377,711 1389,714 1400,714 1411,711 1432,700 1466,696 1499,697';

function drawTrains() {
  grid(686, 776, [724, 740]);
  box(LEFT, 694, END, 708, '#d9f6d9');
  box(LEFT, 756, END, 771, '#ffdcda');
  const train = flat(slowTrain), signal = parse(slowSignal);
  area([[1007, 708], ...train.filter(p => p[0] > 1007 && p[0] < 1345)], [[1007, 708], [1345, 708]], '#80c080');
  area([[1390, 708], ...train.filter(p => p[0] > 1390)], [[1390, 708], [1499, 708]], '#80c080');
  area(train.filter(p => p[0] >= 885 && p[0] < 1030), signal.filter(p => p[0] >= 885 && p[0] < 1030), '#bcbcec');
  area(train.filter(p => p[0] >= 1331 && p[0] < 1378), signal.filter(p => p[0] >= 1331 && p[0] < 1378), '#eec0ee');
  area(train.filter(p => p[0] >= 1377 && p[0] < 1412), signal.filter(p => p[0] >= 1377 && p[0] < 1412), '#c4c4ea');
  [693.5, 708.5, 755.5, 771.5].forEach(y => line(LEFT, y, END, y, '#000', 1, '', crisp));
  line(LEFT, 732, END, 732, '#0000a0', 2, '5 4', crisp);

  const lag = fast.map(([x, y]) => [x + 7, y]).filter(p => p[0] <= END);
  for (let i = 1; i < fast.length; i++) {
    const a = fast[i - 1], b = fast[i], falls = b[1] > a[1];
    if (Math.abs(b[1] - a[1]) > 4) area([a, b], [[a[0] + 7, a[1]], [b[0] + 7, b[1]]], falls ? '#f6bcbc' : '#c0ecc0');
  }
  poly(lag, '#222', 1, '4 3');
  for (let i = 1; i < fast.length; i++) poly([fast[i - 1], fast[i]], fast[i][1] > fast[i - 1][1] ? '#e02020' : '#000', 2);
  runs(slowTrain, 4);
  poly(signal, '#222', 3, '5 6');

  [[58,702],[158,702],[213,702],[303,699],[325,696],[348,697],[437,764],[459,766],[571,702],[627,707],[694,699],[850,697],[918,703],[941,704],[997,696],[1018,697],[1120,698],[1141,698],[1186,706],[1242,704],[1264,709],[1286,699],[1309,697],[1331,699],[1443,695]].forEach(p => down(...p, '#b00000'));
  [[68,702],[114,716],[181,703],[236,705],[314,698],[337,697],[427,766],[448,765],[483,767],[605,710],[660,713],[762,757],[885,711],[930,705],[952,702],[1008,698],[1074,710],[1131,699],[1175,703],[1220,706],[1254,710],[1275,705],[1297,699],[1320,699],[1377,762],[1477,705]].forEach(p => up(...p, '#0000b8'));

  frame(775.5);
  box(1879.5, 687, 1910, 694, '#f4f6f7', '#748d99');
  box(1879.5, 690, 1910, 694, '#f4f6f7', '#748d99');
  tick(723, '60');
  tick(741, '40');
  tag(699.5, '91,931', '#111', 31);
  tag(710.5, '80', '#111', 13);
  tag(732.5, '50', '#0000c0', 13);
  tag(755.5, '20', '#111', 13);
  tag(768.5, '0', '#111', 7);
}

const willy = [
  ['#00c400', '159,788 191,783 202,786 214,793 225,785 237,785 248,792 259,782 270,782 281,788 292,783 303,783 315,783 326,785 337,782 348,787 359,796'],
  ['#ff9800', '371,801 381,815 393,827'], ['#0000b4', '404,824'], ['#8c0000', '416,833'], ['#0000b4', '426,827'], ['#ff9800', '437,829'],
  ['#8c0000', '448,834 460,838 471,836 483,836 494,833 505,832'], ['#0000b4', '516,830 527,830'], ['#8c0000', '538,829 549,831'], ['#0000b4', '560,828'],
  ['#8c0000', '572,829 583,831'], ['#0000b4', '605,829 616,829'], ['#8c0000', '627,831 650,831'], ['#0000b4', '661,830 671,828 683,825'],
  ['#ff9800', '694,825'], ['#8c0000', '706,831'], ['#0000b4', '717,830'], ['#8c0000', '728,835 739,840 750,840 772,832'],
  ['#0000b4', '784,829 795,824'], ['#ff9800', '806,828'], ['#0000b4', '818,815 829,798'],
  ['#00c400', '840,784 850,786 863,794 873,789 885,784 896,787 907,785 918,788 929,784 941,787 951,783 963,782 974,786 985,783 1007,783 1029,785 1040,791 1052,785 1074,788 1085,783 1107,784 1119,786 1130,783 1141,783 1152,788 1164,784 1175,783 1186,796 1197,785 1208,783 1231,783 1242,797 1253,784 1264,788 1275,784 1286,787 1297,783 1309,788 1321,784 1331,791'],
  ['#ff9800', '1342,806 1366,809'], ['#0000b4', '1376,798'],
  ['#00c400', '1389,790 1397,791 1409,782 1432,782 1454,786 1466,793 1477,783 1488,783 1499,786']
];

function drawWilly() {
  grid(776, 850, [814]);
  const band = (list, c) => list.forEach(([a, b]) => box(a, 776, b, 849, c));
  band([[164,197],[219,231],[253,275],[286,298],[309,320],[331,343],[834,845],[868,890],[901,912],[923,935],[946,968],[979,991],[1046,1058],[1080,1091],[1102,1114],[1125,1136],[1158,1181],[1192,1214],[1225,1237],[1248,1259],[1270,1281],[1292,1304],[1315,1326],[1371,1393],[1404,1427],[1471,1482]], '#c1c1fb');
  band([[387,398],[409,421],[432,465],[521,532],[543,555],[566,588],[622,644],[689,711],[722,745],[801,812]], '#ffa4a4');
  band([[376,387]], '#c06c6c');
  band([[823,834]], '#64c064');
  line(LEFT, 781.5, END, 781.5, '#000', 1, '4 3', crisp);
  line(LEFT, 846.5, END, 846.5, '#000', 1, '4 3', crisp);
  line(LEFT, 814, END, 814, '#0000a0', 2, '5 4', crisp);
  runs(willy, 4, (c, pts) => {
    const base = c === '#00c400' ? 798 : c === '#8c0000' ? 831 : 0;
    if (base) area(pts, [[pts[0][0], base], [pts[pts.length - 1][0], base]], base === 798 ? '#3a9a3a70' : '#80303070');
  });
  line(LEFT, 798, END, 798, '#0000a0', 2, '', crisp);
  line(LEFT, 830, END, 830, '#d00000', 2, '', crisp);
  down(371, 814, '#b00000', 6);
  up(818, 815, '#0000b8', 6);

  frame(849.5);
  tag(785.5, '-4,7965', '#00b000', 34);
  tag(798.5, '-25', '#000096', 16);
  tag(814.5, '-50', '#000096', 16);
  tag(830.5, '-75', '#d00000', 16);
  tag(842.5, '-100', '#111', 21);
}

const momentum = [
  ['#00003c', '91,919 160,918 237,916 280,915 303,911 325,909 337,906 348,901 359,900'], ['#b000b0', '371,904 381,908 393,917 404,919 415,921'],
  ['#00003c', '437,924'], ['#b000b0', '448,926 460,928'], ['#00003c', '483,928 505,926 527,923 560,920 605,917 627,917'], ['#b000b0', '640,917'],
  ['#00003c', '694,915'], ['#b000b0', '727,918 750,923'], ['#00003c', '772,922 784,919 829,918 850,915'], ['#b000b0', '873,915'],
  ['#00003c', '900,913'], ['#b000b0', '930,914'], ['#00003c', '963,911 1020,910'], ['#b000b0', '1052,911'], ['#00003c', '1063,911'],
  ['#b000b0', '1085,913'], ['#00003c', '1119,910 1141,907 1175,903'], ['#b000b0', '1197,906'], ['#00003c', '1220,903 1253,902 1264,894 1275,884 1286,879 1309,873 1331,872'],
  ['#b000b0', '1342,885 1353,905 1366,913'], ['#00003c', '1376,912 1389,903 1400,898 1409,895 1432,880 1454,874'], ['#b000b0', '1466,876 1477,877'], ['#00003c', '1488,866 1499,859']
];
const evolution = [
  ['#ff9800', '91,918 114,918'], ['#60ff60', '200,917 292,915 325,909 348,906 370,903 381,903'], ['#ff9800', '404,907 426,914 448,919 483,922 505,922'],
  ['#60ff60', '549,921 571,920'], ['#ff9800', '583,921'], ['#60ff60', '616,920'], ['#ff9800', '627,920'], ['#60ff60', '694,918 728,918'], ['#ff9800', '750,920 772,921'],
  ['#60ff60', '820,918 885,916 930,914 963,912 1007,909 1029,907 1052,907'], ['#ff9800', '1085,909'], ['#60ff60', '1119,907 1141,904 1175,900 1186,900'],
  ['#ff9800', '1208,900'], ['#60ff60', '1220,900'], ['#ff9800', '1231,900'], ['#60ff60', '1253,898 1264,893 1280,888 1300,879 1320,870 1331,869'],
  ['#ff9800', '1342,871 1353,874 1366,883 1376,889 1389,891'], ['#60ff60', '1409,889 1432,875 1454,867 1466,864 1477,864 1488,861 1499,856']
];

function drawAwesome() {
  grid(850, 932, [863, 877, 891, 905]);
  const quick = flat(momentum), slow = flat(evolution);
  const part = (pts, a, b) => pts.filter(p => p[0] >= a && p[0] <= b);
  area(part(slow, 370, 448), part(quick, 370, 448), '#ffd0d0');
  area(part(slow, 1331, 1389), part(quick, 1331, 1389), '#ffd0d0');
  area(part(slow, 1389, 1477), part(quick, 1389, 1477), '#ccf8cc');
  for (let i = 112; i < 118; i++) line(qx(i) + 5, valueAt(slow, qx(i) + 5), qx(i) + 5, 919, '#e8a8a8');
  line(LEFT, 919, END, 919, '#2020e0', 2, '', crisp);
  for (let i = 14; i <= 127; i++) {
    const x = qx(i), y = valueAt(quick, x), falling = y > valueAt(quick, x - 6) + 0.2;
    if (y < 919) {
      box(x - 5, y, x + 5, 919.5, falling ? '#ff00f8' : '#1414ff');
      line(x + 5, y, x + 5, 919.5, falling ? '#ffb0ff' : '#9090ff');
      line(x - 5, y, x - 5, 919.5, falling ? '#b000b0' : '#0000a0');
    } else if (y > 920.5) box(x - 5, 920, x + 4.5, y, falling ? '#ff2020' : '#109090', '#301010');
  }
  runs(momentum, 4);
  runs(evolution, 4);
  [[170,917],[226,916],[259,916],[382,907],[728,918],[818,918],[874,916],[930,913],[1019,909],[1310,873]].forEach(p => down(...p, '#f4f400'));
  [[193,918],[237,917],[270,916],[561,921],[784,920],[840,917],[885,916],[963,913],[1264,894]].forEach(p => up(...p, '#00f4f4'));

  frame(931.5);
  tag(857, '9.083,4', '#111', 34);
  tag(865.5, '8.688,1', '#1414e0', 34);
  tick(877, '6.000');
  tick(891, '4.000');
  tick(905, '2.000');
  tag(913.5, '0', '#1414e0', 7);
  tag(919.5, '0', '#1414e0', 7);
  tag(925.5, '0', '#1414e0', 7);
}

function drawForce() {
  grid(932, 996, [938, 993]);
  box(LEFT + 1, 932, END, 965, '#40ff40');
  box(LEFT + 1, 965, END, 995, '#38d650');
  [[63,97],[108,119],[421,678],[778,812],[823,857],[924,957],[991,1002],[1024,1035],[1091,1102],[1125,1136],[1304,1315],[1393,1404],[1494,1500]].forEach(([a, b]) => {
    box(a, 932, b, 965, '#ffff88');
    box(a, 965, b, 995, '#d4d488');
  });
  box(1500, 932, 1505, 995, '#ffff88');
  line(LEFT, 965.5, END, 965.5, '#000', 1, '', crisp);

  frame(995.5);
  tick(938, '0,505');
  tag(965.5, '0,5000', '#111', 31);
  tick(991, '0,495');
}

function drawTime() {
  for (let y = 1993; y <= 2034; y++) {
    const x = 79.5 + (y - 1994) * 44.72;
    line(x, 0, x, 3, '#748d99', 1, '', crisp);
    if (y > 1993 && y < 2034) text(x, 11, y, '#111', 'axis-text', 'middle');
  }
}

function render() {
  panel('price', 23, 663, drawPrice);
  panel('trains', 686, 90, drawTrains);
  panel('willy', 776, 74, drawWilly);
  panel('awesome', 850, 82, drawAwesome);
  panel('force', 932, 64, drawForce);
  panel('time', 0, 14, drawTime);
}
render();
window.addEventListener('resize', render);
```
